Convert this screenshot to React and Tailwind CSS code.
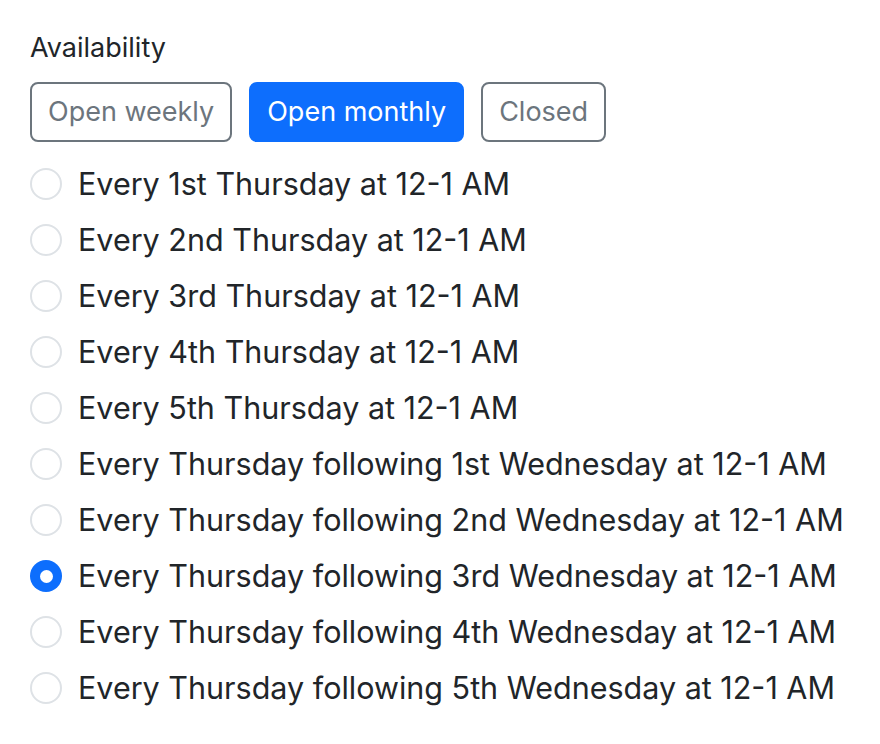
import { useState } from 'react'

const OPTIONS = [
  'Every 1st Thursday at 12-1 AM',
  'Every 2nd Thursday at 12-1 AM',
  'Every 3rd Thursday at 12-1 AM',
  'Every 4th Thursday at 12-1 AM',
  'Every 5th Thursday at 12-1 AM',
  'Every Thursday following 1st Wednesday at 12-1 AM',
  'Every Thursday following 2nd Wednesday at 12-1 AM',
  'Every Thursday following 3rd Wednesday at 12-1 AM',
  'Every Thursday following 4th Wednesday at 12-1 AM',
  'Every Thursday following 5th Wednesday at 12-1 AM',
]

const MODES = ['Open weekly', 'Open monthly', 'Closed']

export default function App() {
  const [mode, setMode] = useState('Open monthly')
  const [picked, setPicked] = useState(7)

  return (
    <div className="min-h-screen bg-white pl-[30px] pt-[30px] font-['Inter',sans-serif] text-[#212529]">
      <div className="text-[27px] leading-[36px]">Availability</div>

      <div className="mt-[16px] flex gap-[17px]">
        {MODES.map((m) => (
          <button
            key={m}
            onClick={() => setMode(m)}
            className={
              m === mode
                ? 'h-[60px] rounded-[8px] border-2 border-[#0d6efd] bg-[#0d6efd] px-[16px] text-[27px] text-white'
                : 'h-[60px] rounded-[8px] border-2 border-[#6c757d] bg-white px-[16px] text-[27px] text-[#6c757d]'
            }
          >
            {m}
          </button>
        ))}
      </div>

      <div className="mt-[14px] flex flex-col">
        {OPTIONS.map((o, i) => (
          <label key={o} className="flex h-[56px] cursor-pointer items-center gap-[16px]" onClick={() => setPicked(i)}>
            {i === picked ? (
              <span className="flex h-[32px] w-[32px] items-center justify-center rounded-full bg-[#0d6efd]">
                <span className="h-[13px] w-[13px] rounded-full bg-white" />
              </span>
            ) : (
              <span className="h-[32px] w-[32px] rounded-full border-2 border-[#dee2e6] bg-white" />
            )}
            <span className="text-[30.5px]">{o}</span>
          </label>
        ))}
      </div>
    </div>
  )
}
